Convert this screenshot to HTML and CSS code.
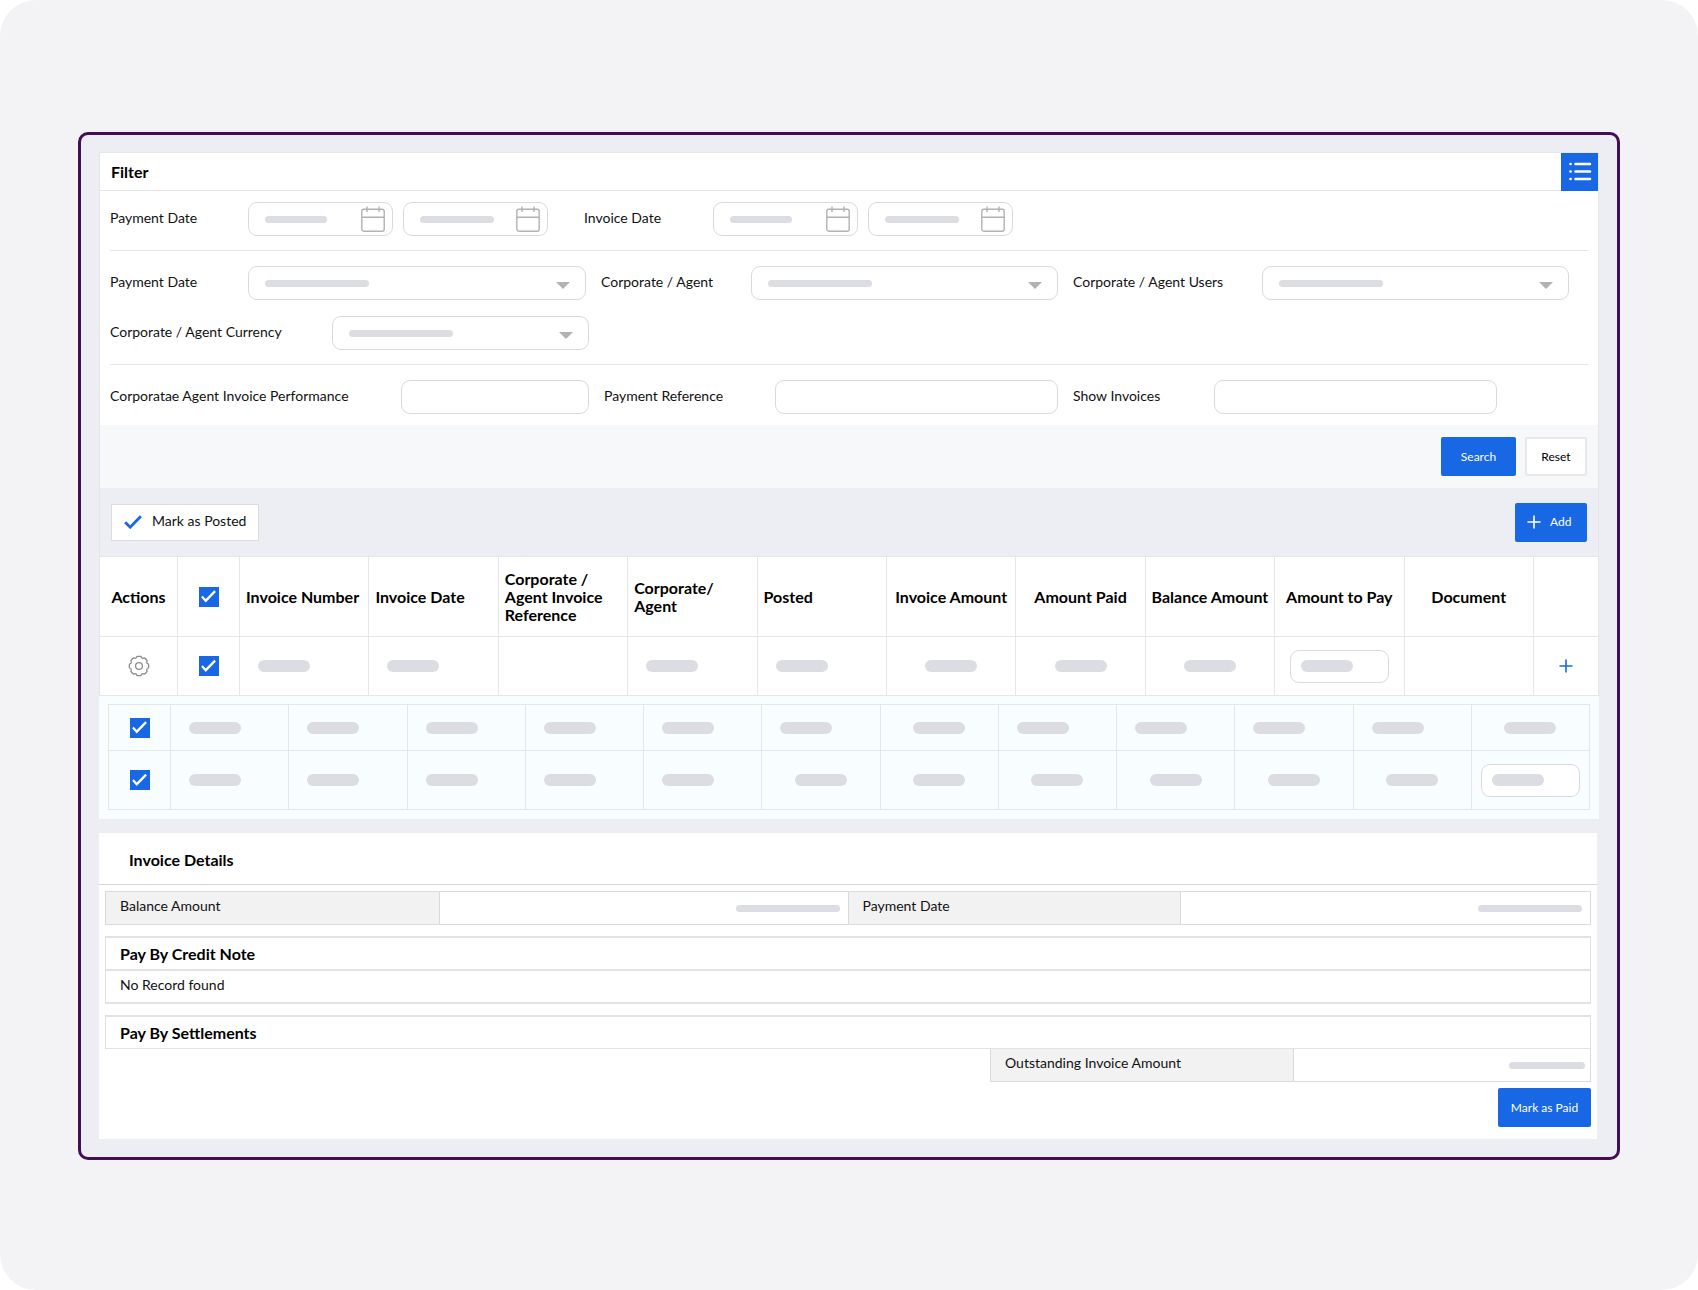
FILE: index.html
```html
<!DOCTYPE html>
<html lang="en">
<head>
<meta charset="utf-8">
<title>Invoice payments</title>
<link rel="stylesheet" href="styles.css">
</head>
<body>
<svg class="sprite" aria-hidden="true">
  <symbol id="calendar" viewBox="0 0 24 26"><g fill="none" stroke="#b3b1b1" stroke-width="1.4"><rect x=".8" y="3.2" width="22.4" height="22" rx="2"/><path d="M.8 11.2h22.4M6 .5v5.6M18 .5v5.6"/></g></symbol>
</svg>
<div class="canvas">
<main class="window">

<form class="filter">
  <header class="filter-head">
    <h2>Filter</h2>
    <button class="list-btn" type="button" aria-label="Toggle filter">
      <svg width="24" height="20" viewBox="0 0 24 20"><g stroke="#fff" stroke-width="2.6" stroke-linecap="round"><path d="M7.500 2h14.500M7.500 9.500h14.500M7.500 17h14.500M2.500 2h.1M2.500 9.500h.1M2.500 17h.1"/></g></svg>
    </button>
  </header>

  <div class="fields">
    <div class="line">
      <label class="c-date" for="pay-from">Payment Date</label>
      <span class="box date"><input id="pay-from"><i class="bar w62"></i><svg><use href="#calendar"/></svg></span>
      <span class="box date next"><input aria-label="Payment date to"><i class="bar w74"></i><svg><use href="#calendar"/></svg></span>
      <label class="c-invdate" for="inv-from">Invoice Date</label>
      <span class="box date"><input id="inv-from"><i class="bar w62"></i><svg><use href="#calendar"/></svg></span>
      <span class="box date next"><input aria-label="Invoice date to"><i class="bar w74"></i><svg><use href="#calendar"/></svg></span>
    </div>
    <hr>
    <div class="line">
      <label class="c-date" for="pay-date">Payment Date</label>
      <span class="box b338"><select id="pay-date"></select><i class="bar w104"></i></span>
      <label class="c-agent" for="agent">Corporate / Agent</label>
      <span class="box b307"><select id="agent"></select><i class="bar w104"></i></span>
      <label class="c-users" for="users">Corporate / Agent Users</label>
      <span class="box b307"><select id="users"></select><i class="bar w104"></i></span>
    </div>
    <div class="line">
      <label class="c-currency" for="currency">Corporate / Agent Currency</label>
      <span class="box b257"><select id="currency"></select><i class="bar w104"></i></span>
    </div>
    <hr>
    <div class="line">
      <label class="c-perf" for="perf">Corporatae Agent Invoice Performance</label>
      <span class="box b188"><input id="perf"></span>
      <label class="c-ref" for="ref">Payment Reference</label>
      <span class="box b283"><input id="ref"></span>
      <label class="c-show" for="show">Show Invoices</label>
      <span class="box b283"><input id="show"></span>
    </div>
  </div>

  <footer class="filter-foot">
    <button class="btn search" type="button">Search</button>
    <button class="btn plain" type="reset">Reset</button>
  </footer>
</form>

<div class="toolbar">
  <button class="posted" type="button"><svg width="18" height="14" viewBox="0 0 18 14"><path d="M1.200 7.200l5 5L16.800 1.200" fill="none" stroke="#1868e5" stroke-width="2.8"/></svg><span>Mark as Posted</span></button>
  <button class="btn add" type="button"><svg width="14" height="14" viewBox="0 0 14 14"><path d="M7 .5v13M.5 7h13" stroke="#fff" stroke-width="1.6"/></svg>Add</button>
</div>

<table class="grid">
  <colgroup><col class="col-act"><col class="col-check"><col span="10"><col class="col-more"></colgroup>
  <thead>
    <tr>
      <th class="mid">Actions</th>
      <th class="mid"><input type="checkbox" checked aria-label="Select all"></th>
      <th>Invoice Number</th><th>Invoice Date</th><th>Corporate / Agent Invoice Reference</th><th>Corporate/<br>Agent</th><th>Posted</th>
      <th class="mid">Invoice Amount</th><th class="mid">Amount Paid</th><th class="mid">Balance Amount</th><th class="mid">Amount to Pay</th><th class="mid">Document</th><th></th>
    </tr>
  </thead>
  <tbody>
    <tr>
      <td class="mid"><button class="icon-btn" type="button" aria-label="Row actions"><svg width="22" height="22" viewBox="0 0 22 22"><g fill="none" stroke="#8d8d8d" stroke-width="1.3" stroke-linejoin="round"><path d="M20.5 9A9.700 9.700 0 0 1 20.500 13Q17.800 13.800 19.100 16.300A9.700 9.700 0 0 1 16.300 19.100Q13.800 17.800 13 20.500A9.700 9.700 0 0 1 9 20.500Q8.200 17.800 5.700 19.100A9.700 9.700 0 0 1 2.900 16.300Q4.200 13.800 1.500 13A9.700 9.700 0 0 1 1.500 9Q4.200 8.200 2.900 5.700A9.700 9.700 0 0 1 5.700 2.900Q8.200 4.200 9 1.500A9.700 9.700 0 0 1 13 1.500Q13.800 4.200 16.300 2.900A9.700 9.700 0 0 1 19.100 5.700Q17.800 8.200 20.500 9z"/><circle cx="11" cy="11" r="3.4"/></g></svg></button></td>
      <td class="mid"><input type="checkbox" checked aria-label="Select invoice"></td>
      <td><i class="pill"></i></td><td><i class="pill"></i></td><td></td><td><i class="pill"></i></td><td><i class="pill"></i></td>
      <td class="mid"><i class="pill"></i></td><td class="mid"><i class="pill"></i></td><td class="mid"><i class="pill"></i></td>
      <td class="mid"><span class="box amount"><input aria-label="Amount to pay"><i class="pill"></i></span></td>
      <td></td>
      <td class="mid"><button class="icon-btn" type="button" aria-label="Expand"><svg width="14" height="14" viewBox="0 0 14 14"><path d="M7 .5v13M.5 7h13" stroke="#1868e5" stroke-width="1.6"/></svg></button></td>
    </tr>
  </tbody>
</table>

<div class="nested">
  <table class="grid sub">
    <colgroup><col class="col-check"><col span="12"></colgroup>
    <tbody>
      <tr>
        <td class="mid"><input type="checkbox" checked aria-label="Select line 1"></td>
        <td><i class="pill"></i></td><td><i class="pill"></i></td><td><i class="pill"></i></td><td><i class="pill"></i></td><td><i class="pill"></i></td><td><i class="pill"></i></td>
        <td class="mid"><i class="pill"></i></td>
        <td><i class="pill"></i></td><td><i class="pill"></i></td><td><i class="pill"></i></td><td><i class="pill"></i></td>
        <td class="mid"><i class="pill"></i></td>
      </tr>
      <tr class="tall">
        <td class="mid"><input type="checkbox" checked aria-label="Select line 2"></td>
        <td><i class="pill"></i></td><td><i class="pill"></i></td><td><i class="pill"></i></td><td><i class="pill"></i></td><td><i class="pill"></i></td>
        <td class="mid"><i class="pill"></i></td><td class="mid"><i class="pill"></i></td><td class="mid"><i class="pill"></i></td><td class="mid"><i class="pill"></i></td><td class="mid"><i class="pill"></i></td><td class="mid"><i class="pill"></i></td>
        <td class="mid"><span class="box amount"><input aria-label="Line amount"><i class="pill"></i></span></td>
      </tr>
    </tbody>
  </table>
</div>

<section class="details">
  <h2>Invoice Details</h2>
  <div class="details-body">
    <dl class="summary">
      <dt>Balance Amount</dt><dd><i class="bar w104"></i></dd>
      <dt>Payment Date</dt><dd><i class="bar w104"></i></dd>
    </dl>
    <div class="card">
      <h3>Pay By Credit Note</h3>
      <p>No Record found</p>
    </div>
    <div class="card settle">
      <h3>Pay By Settlements</h3>
    </div>
    <dl class="summary outstanding">
      <dt>Outstanding Invoice Amount</dt><dd><i class="bar w76"></i></dd>
    </dl>
    <button class="btn paid" type="button">Mark as Paid</button>
  </div>
</section>

</main>
</div>
</body>
</html>
```
FILE: styles.css
```css
* { box-sizing: border-box; }
body { margin: 0; background: #fff; color: #111; font: 14px/18px Lato, "Open Sans", sans-serif; }
h2, h3, p, dl, dd { margin: 0; }
h2, h3, th { font-size: 16px; line-height: 18px; font-weight: 700; color: #000; }
button, input, select { font: inherit; }
button { cursor: pointer; }
svg { display: block; }
.sprite { position: absolute; width: 0; height: 0; }

.canvas { min-height: 100vh; padding: 132px 78px 128px; background: #f3f3f5; border-radius: 36px; }
.window { padding: 17px 18px 18px; border: 3px solid #420f55; border-radius: 10px; background: #edeef3; }

/* Filter panel */
.filter { border: 1px solid #e6e6e8; border-bottom: 0; background: #fff; }
.filter-head { display: flex; align-items: center; justify-content: space-between; height: 38px; padding-left: 11px; border-bottom: 1px solid #e6e6e8; }
.list-btn { display: grid; place-items: center; width: 37px; height: 38px; margin-bottom: -1px; padding: 0; border: 0; background: #1868e5; }
.fields { padding: 11px 10px; }
.fields hr { height: 1px; margin: 14px 0 15px; border: 0; background: #e6e6e8; }
.line { display: flex; align-items: center; }
.line + .line { margin-top: 16px; }
.line label { flex: none; padding-bottom: 3px; white-space: nowrap; }
.c-date { width: 138px; }
.c-invdate { width: 165px; padding-left: 36px; }
.c-agent { width: 165px; padding-left: 15px; }
.c-users { width: 204px; padding-left: 15px; }
.c-currency { width: 222px; }
.c-perf { width: 291px; }
.c-ref { width: 186px; padding-left: 15px; }
.c-show { width: 156px; padding-left: 15px; }

.box { display: grid; align-items: center; height: 34px; }
.box > * { grid-area: 1 / 1; }
.box input, .box select { width: 100%; height: 100%; margin: 0; padding: 0 16px; border: 1px solid #dadadc; border-radius: 9px; background: #fff; appearance: none; }
.box:has(select)::after { content: ""; grid-area: 1 / 1; justify-self: end; margin: 4px 16px 0 0; border: solid transparent; border-width: 7px 7px 0; border-top-color: #b3b1b1; pointer-events: none; }
.box .bar { margin-left: 17px; pointer-events: none; }
.box svg { justify-self: end; width: 24px; height: 26px; margin-right: 8px; pointer-events: none; }
.date { width: 145px; }
.date.next { margin-left: 10px; }
.b188 { width: 188px; }
.b257 { width: 257px; }
.b283 { width: 283px; }
.b307 { width: 307px; }
.b338 { width: 338px; }

.bar { display: block; height: 7px; border-radius: 4px; background: #dcdde2; }
.w62 { width: 62px; }
.w74 { width: 74px; }
.w76 { width: 76px; }
.w104 { width: 104px; }

.filter-foot { display: flex; justify-content: flex-end; gap: 9px; padding: 12px 11px; background: #f7f8fa; }
.btn { height: 39px; padding: 0; border: 0; border-radius: 2px; background: #1868e5; color: #fff; font-size: 12px; }
.search { width: 75px; }
.plain { width: 62px; border: 2px solid #e8e8ea; background: #fff; color: #000; }

/* Toolbar above the grid */
.toolbar { display: flex; align-items: center; justify-content: space-between; height: 68px; padding: 0 11px; border: solid #e6e6e8; border-width: 0 1px; }
.posted { display: flex; align-items: center; gap: 10px; height: 37px; padding: 0 12px; border: 1px solid #dcdcdf; background: #fff; color: #111; white-space: nowrap; }
.posted span { padding-bottom: 2px; }
.add { display: flex; align-items: center; gap: 9px; width: 72px; padding: 0 12px; }

/* Invoice grid */
.grid { width: 100%; table-layout: fixed; border-collapse: collapse; background: #fff; }
.grid th, .grid td { border: 1px solid #e6e6e8; }
.grid th { height: 80px; padding: 0 6px; text-align: left; }
.grid td { height: 59px; padding: 0 18px; }
.grid .mid { padding: 0; text-align: center; }
.col-act { width: 78px; }
.col-check { width: 62px; }
.col-more { width: 65px; }
.pill { display: block; width: 52px; height: 12px; border-radius: 6px; background: #dcdde2; }
.mid > .pill { margin: 0 auto; }
.amount { width: 99px; height: 33px; margin: 0 auto; }
.amount .pill { margin-left: 11px; }
.icon-btn { display: block; margin: 0 auto; padding: 0; border: 0; background: none; }
input[type="checkbox"] { display: block; width: 20px; height: 20px; margin: 0 auto; appearance: none; border: 1px solid #1868e5; background: #fff; }
input[type="checkbox"]:checked { border: 0; background: #1868e5; }
input[type="checkbox"]:checked::before { content: ""; display: block; height: 20px; background: #fff; clip-path: polygon(13% 54%, 21% 46%, 36% 63%, 79% 19%, 87% 27%, 36% 80%); }

.nested { padding: 8px 9px 9px; background: #f8fdff; }
.sub { background: none; }
.sub td { height: 46px; }
.sub .tall td { height: 59px; }

/* Invoice details */
.details { margin: 14px 2px 0 0; padding-bottom: 12px; background: #fff; }
.details h2 { padding: 18px 30px 15px; border-bottom: 1px solid #d6d6d8; }
.details-body { display: flex; flex-direction: column; padding: 6px 6px 0; }
.summary { display: grid; grid-template-columns: 334fr 409fr 333fr 410fr; border: solid #dadada; border-width: 1px 0 1px 1px; }
.summary dt { height: 32px; padding: 5px 14px; border-right: 1px solid #dadada; background: #f2f2f2; }
.summary dd { display: flex; align-items: center; justify-content: flex-end; padding-right: 8px; border-right: 1px solid #dadada; }
.card { margin-top: 11px; border: 2px solid #e2e2e2; border-width: 2px 1px; }
.card h3 { height: 31px; padding: 7px 14px; }
.card p { height: 33px; padding: 5px 14px; border-top: 2px solid #e2e2e2; }
.settle { border-bottom-width: 1px; }
.outstanding { grid-template-columns: 304fr 297fr; align-self: flex-end; width: 601px; max-width: 100%; border-top: 0; }
.outstanding dd { padding-right: 5px; }
.paid { align-self: flex-end; width: 93px; margin-top: 6px; }
```
